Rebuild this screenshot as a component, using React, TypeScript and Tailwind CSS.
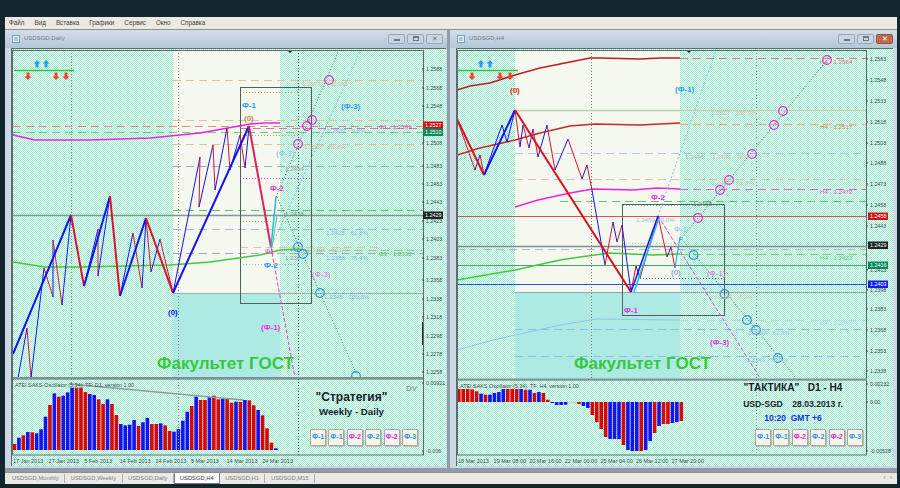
import React from "react";

type Pt = [number, number];
type H = [number, number, number, string, number?, string?];

const BLUE = "#1414e8";
const RED = "#de1030";

const menu = ["Файл", "Вид", "Вставка", "Графики", "Сервис", "Окно", "Справка"];
const tabs = ["USDSGD,Monthly", "USDSGD,Weekly", "USDSGD,Daily", "USDSGD,H4", "USDSGD,H1", "USDSGD,M15"];

function Zig({ pts, w = 1, first = BLUE, second = RED }: { pts: Pt[]; w?: number; first?: string; second?: string }) {
  return (
    <>
      {pts.slice(1).map((p, i) => (
        <line key={i} x1={pts[i][0]} y1={pts[i][1]} x2={p[0]} y2={p[1]} stroke={i % 2 === 0 ? first : second} strokeWidth={w} />
      ))}
    </>
  );
}

function Curve({ pts, color, w = 1.5 }: { pts: Pt[]; color: string; w?: number }) {
  return <polyline points={pts.map((p) => p.join(",")).join(" ")} fill="none" stroke={color} strokeWidth={w} />;
}

function HLines({ rows }: { rows: H[] }) {
  return (
    <>
      {rows.map(([y, a, b, c, w = 1, d], i) => (
        <line key={i} x1={a} x2={b} y1={y + 0.5} y2={y + 0.5} stroke={c} strokeWidth={w} strokeDasharray={d} />
      ))}
    </>
  );
}

function Label({ x, y, t, c, s = 6.2, b = false, o = 1 }: { x: number; y: number; t: string; c: string; s?: number; b?: boolean; o?: number }) {
  return (
    <text x={x} y={y} fill={c} fontSize={s} fontWeight={b ? 700 : 400} opacity={o}>
      {t}
    </text>
  );
}

function Rings({ pts, c }: { pts: Pt[]; c: string }) {
  return (
    <>
      {pts.map((p, i) => (
        <circle key={i} cx={p[0]} cy={p[1]} r={4.3} fill="none" stroke={c} strokeWidth={1.2} />
      ))}
    </>
  );
}

function Tag({ x, y, t, c }: { x: number; y: number; t: string; c: string }) {
  return (
    <>
      <rect x={x} y={y - 3.5} width={20} height={7.5} fill={c} />
      <text x={x + 2} y={y + 2.3} fill="#fff" fontSize={5.4}>
        {t}
      </text>
    </>
  );
}

function Axis({ x, rows }: { x: number; rows: [string, number][] }) {
  return (
    <>
      {rows.map(([t, y]) => (
        <g key={t}>
          <line x1={x - 2} x2={x} y1={y} y2={y} stroke="#445" strokeWidth={1} />
          <text x={x + 2} y={y + 2} fill="#3c4650" fontSize={5.3}>
            {t}
          </text>
        </g>
      ))}
    </>
  );
}

function Signals({ x }: { x: number }) {
  const up = (cx: number) => `M${cx} 60l3.5 3.5h-2v4h-3v-4h-2z`;
  const down = (cx: number) => `M${cx} 80l-3.5-3.5h2v-4h3v4h2z`;
  return (
    <>
      <line x1={x} x2={x + 60} y1={70.5} y2={70.5} stroke="#32c832" strokeWidth={1.5} />
      <path d={up(x + 23)} fill="#2a9cf0" />
      <path d={up(x + 32)} fill="#2a9cf0" />
      <path d={down(x + 14)} fill="#f0442a" />
      <path d={down(x + 42)} fill="#f0442a" />
      <path d={down(x + 52)} fill="#f0442a" />
    </>
  );
}

function Triangle({ x }: { x: number }) {
  return <path d={`M${x - 3} 50h6l-3 3z`} fill="#111" />;
}

function LeftMain() {
  return (
    <svg width={434} height={330} viewBox="12 49 434 330" className="block">
      <rect x={173} y={50} width={107} height={243} fill="#f5f8ee" />
      <rect x={173} y={293} width={107} height={85} fill="#aeeae4" />
      <line x1={71.5} x2={71.5} y1={50} y2={378} stroke="#6f9c90" strokeDasharray="1 2" />
      <line x1={178.5} x2={178.5} y1={50} y2={378} stroke="#8a8a78" strokeDasharray="1 2" />
      <line x1={298.5} x2={298.5} y1={50} y2={378} stroke="#4a5a5a" strokeDasharray="1 2" />
      <HLines
        rows={[
          [80, 173, 423, "#e2c09c", 1, "8 5"],
          [120, 173, 423, "#e2c09c", 1, "8 5"],
          [126, 13, 423, "#e48a8a", 1, "8 5"],
          [128, 240, 423, "#e070b0", 1, "8 5"],
          [132, 13, 423, "#6cd47c", 1, "8 5"],
          [144, 173, 423, "#e2c09c", 1, "8 5"],
          [166, 173, 423, "#9fb0c4", 1, "8 5"],
          [210, 173, 423, "#5cc874", 1, "8 5"],
          [215, 13, 423, "#7c9690", 1.5],
          [229, 173, 423, "#9cc0e0", 1, "8 5"],
          [247, 240, 380, "#e0c4a8", 1, "8 5"],
          [250, 290, 423, "#7cd888", 1, "8 5"],
          [253, 173, 423, "#a4acc8", 1, "8 5"],
          [293, 173, 423, "#9cb0ac"],
          [92, 240, 300, "#d89a58", 1, "1 2"],
          [135, 240, 300, "#d89a58", 1, "1 2"],
          [178, 240, 310, "#e050e0", 1, "1 2"],
          [221, 240, 300, "#70d070", 1, "1 2"],
          [264, 240, 300, "#80d0e0", 1, "1 2"],
        ]}
      />
      <rect x={240.5} y={87.5} width={71} height={216} fill="none" stroke="#50605c" />
      <Curve pts={[[13, 135], [35, 140], [90, 140], [150, 138], [200, 133], [250, 124], [265, 123], [280, 123]]} color="#ee22e0" />
      <Curve pts={[[13, 262], [45, 267], [80, 267], [170, 265], [210, 262], [260, 255], [280, 250], [300, 249]]} color="#42c83c" />

      <line x1={276} y1={197} x2={338} y2={52} stroke="#4f6a64" strokeDasharray="1 2" />
      <line x1={277} y1={197} x2={357} y2={375} stroke="#4f6a64" strokeDasharray="1 2" />
      <line x1={271} y1={247} x2={360} y2={52} stroke="#74c4ea" strokeDasharray="2 2" />
      <line x1={271} y1={247} x2={295} y2={378} stroke="#e040d8" strokeDasharray="4 2" />

      <Zig pts={[[18, 378], [27, 328], [31, 378], [44, 268], [53, 297], [53, 240], [62, 305], [71, 215]]} />
      <Zig pts={[[84, 286], [98, 229], [98, 276], [110, 196]]} />
      <Zig pts={[[120, 296], [133, 233], [142, 288], [146, 218], [151, 272], [160, 239], [173, 293]]} />
      <Zig pts={[[173, 293], [200, 157], [199, 207], [213, 145], [215, 190], [227, 128], [230, 170], [240, 135], [245, 168], [249, 127]]} />
      <Zig w={2} pts={[[13, 354], [71, 215], [84, 286], [110, 196], [120, 296], [146, 218], [173, 293], [249, 126]]} />
      <line x1={249} y1={126} x2={271} y2={247} stroke="#e0205c" strokeWidth={2} />
      <line x1={271} y1={247} x2={276} y2={197} stroke="#22b8f0" strokeWidth={1.5} />
      <line x1={272} y1={247} x2={277} y2={215} stroke="#48c890" strokeWidth={1} />

      <Rings pts={[[298, 144], [307, 126], [312, 120], [329, 80]]} c="#f020e0" />
      <Rings pts={[[298, 247], [303, 254], [320, 293], [356, 376]]} c="#2a90e0" />

      <Signals x={14} />
      <Triangle x={290} />

      <Label x={242} y={108} t="Ф-1" c="#2f9ae8" s={8} b />
      <Label x={244} y={121} t="(0)" c="#c88a50" s={8} b />
      <Label x={276} y={156} t="(Ф-1)" c="#7cc0ee" s={8} />
      <Label x={270} y={191} t="Ф-2" c="#ee30e0" s={8} b />
      <Label x={341} y={109} t="(Ф-3)" c="#2f9ae8" s={8} b />
      <Label x={265} y={254} t="Ф1" c="#e040d0" s={7} />
      <Label x={264} y={268} t="Ф-2" c="#2f9ae8" s={8} b />
      <Label x={312} y={277} t="(Ф-3)" c="#e860e0" s={8} />
      <Label x={261} y={330} t="(Ф-1)" c="#ee30e0" s={8} b />
      <Label x={168} y={315} t="(0)" c={BLUE} s={8} b />

      <Label x={302} y={86} t="1.2577 · 100.0%" c="#c8a890" o={0.8} />
      <Label x={304} y={149} t="1.2507 · 61.8%" c="#c8a890" o={0.8} />
      <Label x={327} y={133} t="1.2527 · 0.0%" c="#88b8d8" />
      <Label x={379} y={129} t="Ф1 - 1.2599" c="#e050c0" />
      <Label x={285} y={171} t="1.2484" c="#90a0a0" />
      <Label x={285} y={216} t="1.2436" c="#509870" />
      <Label x={326} y={235} t="1.2415 · 61.8%" c="#80b0e0" />
      <Label x={307} y={252} t="1.2395 · 50.0%" c="#c8b0a0" o={0.7} />
      <Label x={285} y={260} t="1.238" c="#8098b0" />
      <Label x={326} y={260} t="1.2388 · 76.4%" c="#80b0e0" />
      <Label x={379} y={256} t="Ф1 - 1.2392" c="#50c060" />
      <Label x={324} y={299} t="1.2345 · 100.0%" c="#80b0e0" />

      <text x={157} y={369} fill="#36c83c" fontSize={17} fontWeight={700}>
        Факультет ГОСТ
      </text>

      <rect x={422} y={322} width={1.5} height={23} fill="#223" />
      <rect x={12.5} y={50.5} width={411} height={328} fill="none" stroke="#5a6c6c" />
      <line x1={13} x2={423} y1={378} y2={378} stroke="#7d9294" strokeWidth={2} />
      <Axis
        x={424}
        rows={[
          ["1.2588", 69], ["1.2568", 88], ["1.2548", 106], ["1.2508", 143], ["1.2483", 166], ["1.2463", 184], ["1.2443", 202],
          ["1.2423", 221], ["1.2403", 239], ["1.2383", 258], ["1.2358", 280], ["1.2338", 299], ["1.2318", 317], ["1.2298", 336],
          ["1.2278", 354], ["1.2258", 372],
        ]}
      />
      <Tag x={423} y={125} t="1.2527" c="#d01414" />
      <Tag x={423} y={132} t="1.2510" c="#0c8a5c" />
      <Tag x={423} y={215} t="1.2429" c="#1c2426" />
    </svg>
  );
}

function RightMain() {
  return (
    <svg width={436} height={331} viewBox="457 49 436 331" className="block">
      <rect x={515} y={50} width={165} height={242} fill="#f5f8ee" />
      <rect x={515} y={292} width={165} height={87} fill="#aeeae4" />
      <line x1={591.5} x2={591.5} y1={50} y2={379} stroke="#807a60" strokeDasharray="1 2" />
      <line x1={756.5} x2={756.5} y1={50} y2={379} stroke="#6f9c90" strokeDasharray="1 2" />
      <HLines
        rows={[
          [58, 680, 866, "#e07c90", 1, "8 5"],
          [110, 515, 866, "#bcd0b8", 1.5],
          [124, 680, 866, "#e2b488", 1.5, "8 5"],
          [153, 515, 866, "#a8c8ec", 1, "8 5"],
          [179, 515, 866, "#dcc4ac", 1, "8 5"],
          [189, 680, 866, "#e060c8", 1, "8 5"],
          [201, 560, 866, "#5cc874", 1, "8 5"],
          [216, 457, 866, "#e05058"],
          [246, 457, 866, "#7c8c88", 1.5],
          [249, 457, 866, "#a8bcd4", 1, "8 5"],
          [254, 680, 866, "#6cd47c", 1, "8 5"],
          [265, 457, 866, "#46a868"],
          [284, 457, 866, "#2050f0"],
          [292, 515, 866, "#8ca8b4"],
          [320, 680, 866, "#b0dce0", 1, "8 5"],
          [329, 515, 866, "#88c0e8", 1, "8 5"],
          [356, 515, 866, "#88c0e8", 1, "8 5"],
          [205, 623, 725, "#60d0c8", 1, "1 2"],
          [243, 623, 680, "#90d8c8", 1, "1 2"],
          [278, 640, 725, "#4060e0", 1, "1 2"],
          [315, 623, 725, "#607070", 1, "1 2"],
        ]}
      />
      <rect x={622.5} y={204.5} width={102} height={111} fill="none" stroke="#50605c" />
      <Curve pts={[[457, 90], [470, 86], [490, 83], [515, 75], [540, 68], [570, 62], [590, 58], [600, 58], [640, 59], [660, 58], [680, 58]]} color="#b82020" />
      <Curve pts={[[457, 155], [480, 148], [515, 140], [540, 133], [570, 126], [595, 124], [640, 125], [680, 123]]} color="#c82a28" />
      <Curve pts={[[515, 207], [538, 200], [570, 193], [593, 189], [633, 190], [657, 188], [680, 189]]} color="#ee22e0" />
      <Curve pts={[[457, 280], [515, 270], [560, 260], [580, 257], [610, 253], [653, 255], [680, 254]]} color="#42c83c" />
      <Curve pts={[[457, 350], [493, 340], [560, 325], [597, 319], [680, 320]]} color="#90c4ec" w={1} />

      <line x1={680} y1={240} x2={827} y2={60} stroke="#4f6a64" strokeDasharray="1 2" />
      <line x1={680} y1={237} x2={796} y2={378} stroke="#4f6a64" strokeDasharray="1 2" />
      <line x1={658} y1={216} x2={716} y2={50} stroke="#74c4ea" strokeDasharray="2 2" />
      <line x1={658} y1={216} x2={760} y2={378} stroke="#e040d8" strokeDasharray="4 2" />

      <Zig first={RED} second={BLUE} pts={[[457, 119], [475, 170], [480, 155], [484, 175]]} />
      <Zig pts={[[484, 175], [502, 125], [507, 142], [515, 110]]} first={BLUE} second={BLUE} />
      <Zig
        first={RED}
        second={BLUE}
        pts={[[515, 110], [520, 147], [523, 125], [529, 148], [533, 129], [538, 157], [547, 125], [555, 170], [568, 139], [582, 179], [587, 165], [592, 190], [605, 265], [613, 222], [617, 242], [622, 225], [631, 292], [636, 266], [640, 278], [658, 216]]}
      />
      <Zig first={RED} second={BLUE} pts={[[658, 216], [667, 257], [671, 247], [675, 268]]} />
      <line x1={675} y1={268} x2={680} y2={237} stroke="#22b8f0" strokeWidth={1.2} />
      <line x1={457} y1={119} x2={484} y2={175} stroke="#d81020" strokeWidth={2} />
      <line x1={484} y1={175} x2={515} y2={110} stroke={BLUE} strokeWidth={2} />
      <line x1={515} y1={110} x2={631} y2={292} stroke="#d81020" strokeWidth={2} />
      <line x1={631} y1={292} x2={658} y2={216} stroke={BLUE} strokeWidth={1.5} />
      <line x1={634} y1={292} x2={659} y2={218} stroke="#22b8f0" strokeWidth={1.5} />

      <Rings pts={[[698, 218], [720, 190], [729, 180], [752, 154], [774, 125], [783, 111], [827, 60]]} c="#f020e0" />
      <Rings pts={[[693.5, 255], [724.5, 294], [747, 320], [756, 330], [778, 358]]} c="#2a90e0" />

      <Signals x={458} />
      <Triangle x={689} />

      <Label x={510} y={93} t="(0)" c="#e02020" s={8} b />
      <Label x={675} y={92} t="(Ф-1)" c="#2f9ae8" s={8} b />
      <Label x={651} y={200} t="Ф-2" c="#ee30e0" s={8} b />
      <Label x={674} y={232} t="Ф-1" c="#80c0e8" s={8} />
      <Label x={671} y={275} t="(0)" c="#6080d8" s={8} />
      <Label x={707} y={276} t="(Ф-1)" c="#e860e0" s={8} />
      <Label x={624} y={313} t="Ф-1" c="#ee30e0" s={8} b />
      <Label x={710} y={345} t="(Ф-3)" c="#ee30e0" s={8} b />

      <Label x={820} y={64} t="H4 - 1.2564" c="#d87878" />
      <Label x={820} y={129} t="H4 - 1.2517" c="#d87860" />
      <Label x={820} y={194} t="H4 - 1.2470" c="#e050c0" />
      <Label x={820} y={260} t="H4 - 1.2423" c="#60c870" />
      <Label x={820} y={325} t="H4 - 1.2376" c="#a8d8e0" />
      <Label x={711} y={115} t="1.2527 · 100.0%" c="#c8b0a0" o={0.8} />
      <Label x={685} y={159} t="1.2496" c="#a0b0b0" />
      <Label x={712} y={159} t="1.2496 · 76.4%" c="#c0b0a0" o={0.8} />
      <Label x={712} y={185} t="1.2484 · 61.8%" c="#c0b0a0" o={0.8} />
      <Label x={693} y={206} t="1.2468" c="#708080" />
      <Label x={636} y={222} t="1.2450 · 0.0%" c="#90c0e0" />
      <Label x={714} y={299} t="1.2392 · 0.0%" c="#d8b8a8" />
      <Label x={748} y={335} t="1.2368 · 61.8%" c="#90c0e0" />
      <Label x={746} y={362} t="1.2349 · 76.4%" c="#90c0e0" />

      <text x={574} y={369} fill="#36c83c" fontSize={17} fontWeight={700}>
        Факультет ГОСТ
      </text>

      <rect x={457.5} y={50.5} width={409} height={329} fill="none" stroke="#5a6c6c" />
      <line x1={458} x2={867} y1={379.5} y2={379.5} stroke="#7d9294" strokeWidth={2} />
      <Axis
        x={868}
        rows={[
          ["1.2563", 59], ["1.2548", 80], ["1.2533", 101], ["1.2518", 122], ["1.2503", 143], ["1.2488", 163], ["1.2473", 184], ["1.2458", 205],
          ["1.2443", 226], ["1.2413", 270], ["1.2398", 290], ["1.2383", 309], ["1.2368", 330], ["1.2353", 351], ["1.2338", 371],
        ]}
      />
      <Tag x={868} y={216} t="1.2458" c="#d01414" />
      <Tag x={868} y={245} t="1.2429" c="#1c2426" />
      <Tag x={868} y={265} t="1.2416" c="#0c8a5c" />
      <Tag x={868} y={284} t="1.2403" c="#1420e8" />
    </svg>
  );
}

const leftBars: [string, number][] = [
  ["r", 312], ["b", 293], ["r", 286], ["b", 276], ["r", 277], ["b", 280], ["b", 268], ["b", 230], ["r", 195], ["b", 160], ["r", 170], ["b", 167],
  ["b", 157], ["b", 143], ["r", 143], ["r", 143], ["r", 156], ["b", 162], ["b", 165], ["r", 178], ["r", 192], ["b", 178], ["r", 192], ["r", 225],
  ["b", 252], ["b", 256], ["b", 254], ["b", 240], ["r", 258], ["b", 247], ["b", 234], ["r", 252], ["r", 252], ["b", 250], ["r", 256], ["r", 273],
  ["b", 275], ["b", 267], ["b", 242], ["b", 215], ["r", 198], ["b", 170], ["r", 180], ["r", 180], ["b", 172], ["r", 167], ["r", 178], ["b", 176],
  ["r", 177], ["r", 188], ["b", 185], ["r", 186], ["b", 180], ["r", 181], ["r", 196], ["b", 210], ["r", 226], ["r", 265], ["r", 308], ["b", 325], ["b", 330],
];

const rightBars: [string, number][] = [
  ["r", 13], ["r", 13], ["r", 13], ["r", 12.7], ["r", 10.7], ["b", 8.3], ["r", 7.3], ["b", 7.3], ["b", 9], ["b", 10], ["b", 13], ["r", 13], ["r", 13],
  ["r", 13], ["b", 13], ["r", 12.3], ["b", 12.3], ["r", 9], ["b", 10], ["r", 9], ["r", 2.3],
  ["b", -1], ["b", -3], ["b", -3], ["b", -2.7], ["g", -1], ["g", -1], ["r", -2], ["b", -4], ["b", -6], ["r", -13], ["r", -20],
  ["r", -27], ["r", -35], ["b", -37], ["b", -37], ["b", -37], ["r", -43], ["b", -48], ["b", -49], ["b", -49], ["r", -49], ["b", -48], ["b", -39], ["r", -31],
  ["b", -24], ["r", -22], ["r", -22], ["b", -21], ["b", -20], ["r", -19],
];

const barColor = (k: string) => (k === "r" ? "#d40a0a" : k === "b" ? "#1414f0" : "#c8c8b8");

function LeftOsc() {
  return (
    <svg width={434} height={77} viewBox="12 379 434 77" className="block">
      {leftBars.map(([k, top], i) => {
        const y = 340 + top / 3;
        return <rect key={i} x={12.7 + i * 4.43} y={y} width={3.6} height={450 - y} fill={barColor(k)} />;
      })}
      <line x1={70} y1={384} x2={243} y2={400} stroke="#8c9ca2" strokeWidth={1.5} />
      <line x1={178.5} x2={178.5} y1={379} y2={455} stroke="#8a8a78" strokeDasharray="1 2" />
      <line x1={298.5} x2={298.5} y1={379} y2={455} stroke="#4a5a5a" strokeDasharray="1 2" />
      <line x1={71.5} x2={71.5} y1={379} y2={384} stroke="#6f9c90" strokeDasharray="1 2" />
      <Label x={15} y={386.5} t="ATEI.SAKS-Oscillator (5,34), TF: D1, version 1.00" c="#3c4650" s={5.4} />
      <Label x={406} y={391} t="DV" c="#90a0a4" s={8} b />
      <rect x={12.5} y={379} width={411} height={76} fill="none" stroke="#5a6c6c" />
      <Axis x={424} rows={[["0.00921", 383], ["-0.006", 451]]} />
    </svg>
  );
}

function RightOsc() {
  return (
    <svg width={436} height={76} viewBox="457 380 436 76" className="block">
      {rightBars.map(([k, h], i) => (
        <rect key={i} x={457 + i * 4.45} y={h > 0 ? 402 - h : 402} width={3.6} height={Math.abs(h)} fill={barColor(k)} />
      ))}
      <line x1={756.5} x2={756.5} y1={380} y2={455} stroke="#6f9c90" strokeDasharray="1 2" />
      <Label x={460} y={388} t="ATEI.SAKS Oscillator (5,34), TF: H4, version 1.00" c="#3c4650" s={5.4} />
      <rect x={457.5} y={380} width={409} height={75} fill="none" stroke="#5a6c6c" />
      <Axis x={868} rows={[["0.00232", 384], ["0.00", 402], ["-0.00528", 451]]} />
    </svg>
  );
}

function FiButton({ t, pink }: { t: string; pink?: boolean }) {
  return (
    <div
      className={`flex h-[17px] w-[16px] items-center justify-center rounded-[1px] border bg-[#f6f3e8] text-[7px] font-bold shadow-[1px_1px_0_#bdbdb0] ${
        pink ? "border-[#9aa2c8] text-[#ee22e0]" : "border-[#a8a898] text-[#2a94e4]"
      }`}
    >
      {t}
    </div>
  );
}

function FiRow() {
  return (
    <div className="flex gap-[2.4px]">
      <FiButton t="Ф-1" />
      <FiButton t="Ф-1" />
      <FiButton t="Ф-2" pink />
      <FiButton t="Ф-2" />
      <FiButton t="Ф-2" pink />
      <FiButton t="Ф-3" />
    </div>
  );
}

function WinButtons({ hot }: { hot?: boolean }) {
  const box = "flex h-[10px] w-[17px] items-center justify-center rounded-[2px] border border-[#9aa8b6] bg-[#c9d6e2]";
  return (
    <div className="flex gap-[2px]">
      <div className={box}>
        <div className="mt-[2px] h-[2px] w-[6px] border border-[#6a7682] bg-white" />
      </div>
      <div className={box}>
        <div className="h-[5px] w-[6px] border border-[#6a7682] border-t-2" />
      </div>
      <div className={hot ? `${box} !border-[#8a5a40] !bg-[#c4694a] text-white` : `${box} text-[#6a7682]`}>
        <span className="text-[7px] leading-none">✕</span>
      </div>
    </div>
  );
}

// checker dither of the chart background; odd flips the phase so both windows land on the same screen pixels
function Dither({ id, odd }: { id: string; odd?: boolean }) {
  return (
    <svg className="absolute inset-0 h-full w-full" shapeRendering="crispEdges">
      <defs>
        <pattern id={id} width="2" height="2" patternUnits="userSpaceOnUse">
          <rect width="2" height="2" fill="#f6fffa" />
          <rect x={odd ? 1 : 0} y="0" width="1" height="1" fill="#9ceed0" />
          <rect x={odd ? 0 : 1} y="1" width="1" height="1" fill="#9ceed0" />
        </pattern>
      </defs>
      <rect width="100%" height="100%" fill={`url(#${id})`} />
    </svg>
  );
}

function ChartWindow({
  id,
  odd,
  title,
  hot,
  width,
  margin,
  main,
  osc,
  times,
  overlay,
}: {
  id: string;
  odd?: boolean;
  title: string;
  hot?: boolean;
  width: string;
  margin: string;
  main: React.ReactNode;
  osc: React.ReactNode;
  times: string[];
  overlay: React.ReactNode;
}) {
  return (
    <div className={`flex h-[438px] flex-col bg-[#ccd8e3] ${width}`}>
      <div className="flex h-[18px] items-center justify-between bg-gradient-to-b from-[#d4deea] to-[#b4c6d6] pb-[1px] pl-[3px] pr-[4px]">
        <div className="flex items-center gap-[4px] pl-[4px] text-[6px] text-[#6c7c8c]">
          <svg width="8" height="8" viewBox="0 0 8 8">
            <rect x="0.5" y="0.5" width="7" height="7" fill="#eef4fa" stroke="#6fa0cc" />
            <path d="M2 3h4M2 5h4" stroke="#6fa0cc" />
          </svg>
          {title}
        </div>
        <WinButtons hot={hot} />
      </div>
      <div className={`relative ml-[6px] border-t border-l border-[#5e6e70] ${margin}`}>
        <Dither id={id} odd={odd} />
        <div className="relative">{main}</div>
        <div className="relative">
          {osc}
          {overlay}
        </div>
        <div className="relative flex h-[10px] items-center pl-[1px] text-[5.5px] text-[#3c4650]">
          {times.map((t) => (
            <span key={t} className="w-[35.6px] shrink-0 whitespace-nowrap">
              {t}
            </span>
          ))}
        </div>
      </div>
    </div>
  );
}

export default function App() {
  return (
    <div className="flex h-[488px] w-[900px] flex-col overflow-hidden bg-[#14262e] pb-[4px] pl-[5px] pr-[3px] pt-[17px] font-['Liberation_Sans',Arial,sans-serif]">
      <div className="flex h-[13px] items-center gap-[10px] border-b border-[#8b8f92] bg-[#ebe9e2] pl-[4px] text-[6.3px] text-[#3a3f44]">
        {menu.map((m) => (
          <span key={m}>{m}</span>
        ))}
      </div>
      <div className="flex flex-1 gap-[3px] bg-[#909ca6]">
        <ChartWindow
          id="dither-left"
          odd
          title="USDSGD,Daily"
          width="w-[442px]"
          margin="mr-[1px]"
          main={<LeftMain />}
          osc={<LeftOsc />}
          times={["17 Jan 2013", "27 Jan 2013", "5 Feb 2013", "14 Feb 2013", "24 Feb 2013", "5 Mar 2013", "14 Mar 2013", "24 Mar 2013"]}
          overlay={
            <div className="absolute left-[273px] top-[11px] flex w-[133px] flex-col items-center text-[#14202c]">
              <div className="text-[12px] font-bold leading-[14px]">"Стратегия"</div>
              <div className="mt-[2px] text-[9.7px] font-bold leading-[11px]">Weekly - Daily</div>
              <div className="mt-[12px] self-end">
                <FiRow />
              </div>
            </div>
          }
        />
        <ChartWindow
          id="dither-right"
          title="USDSGD,H4"
          hot
          width="w-[447px]"
          margin="mr-[4px]"
          main={<RightMain />}
          osc={<RightOsc />}
          times={["18 Mar 2013", "19 Mar 08:00", "20 Mar 16:00", "22 Mar 00:00", "25 Mar 04:00", "26 Mar 12:00", "27 Mar 20:00"]}
          overlay={
            <div className="absolute left-[266px] top-[2px] flex w-[140px] flex-col items-center text-[#14202c]">
              <div className="whitespace-pre text-[10.1px] font-bold leading-[12px]">{'"ТАКТИКА"   D1 - H4'}</div>
              <div className="mt-[5px] whitespace-pre text-[8.6px] font-bold leading-[10px]">{"USD-SGD    28.03.2013 г."}</div>
              <div className="mt-[4px] whitespace-pre text-[8.5px] font-bold leading-[10px] text-[#1030e0]">{"10:20  GMT +6"}</div>
              <div className="mt-[6px] self-end">
                <FiRow />
              </div>
            </div>
          }
        />
      </div>
      <div className="flex h-[12px] items-center border-t border-[#8b8f92] bg-[#ebe9e2] pl-[1.5px] pr-[5px] text-[5.8px] text-[#7a7f84]">
        {tabs.map((t) => (
          <div
            key={t}
            className={
              t === "USDSGD,H4"
                ? "flex h-[11px] items-center border-x border-b border-[#7a7f84] bg-white px-[5px] text-[#30363c]"
                : "flex h-[9px] items-center border-r border-[#a9adb0] px-[5.5px]"
            }
          >
            {t}
          </div>
        ))}
        <div className="ml-auto flex gap-[4px] text-[7px] text-[#8a8f94]">
          <span>‹</span>
          <span>›</span>
        </div>
      </div>
    </div>
  );
}
